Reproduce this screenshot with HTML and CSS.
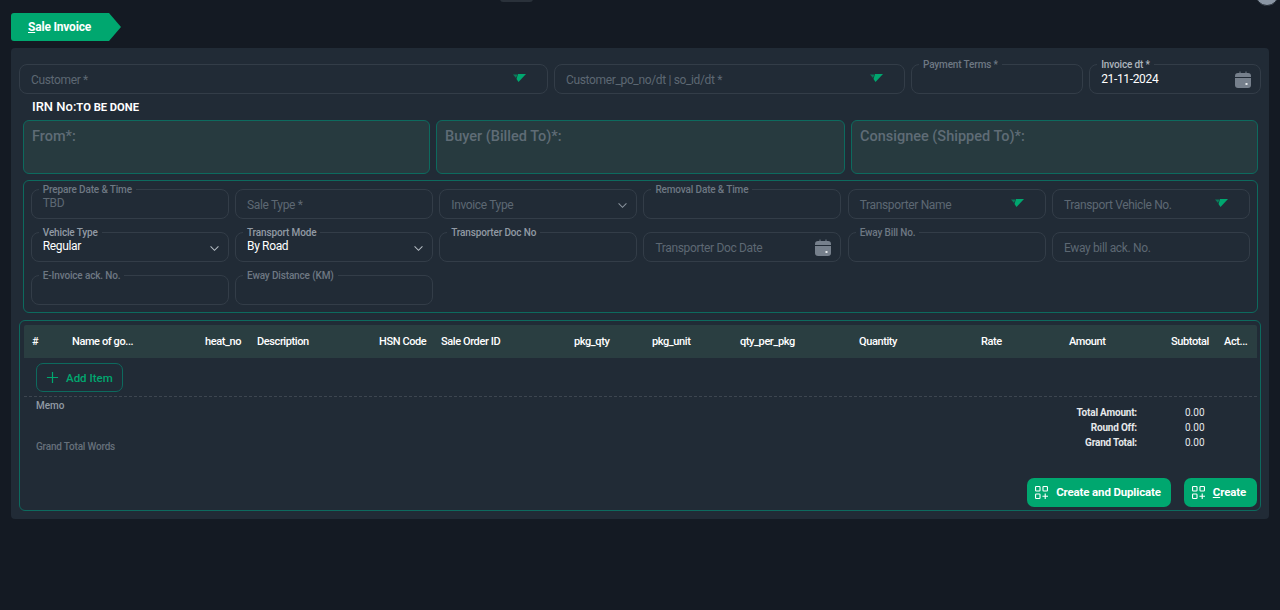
FILE: index.html
```html
<!DOCTYPE html>
<html lang="en">
<head>
<meta charset="utf-8">
<title>Sale Invoice</title>
<link rel="stylesheet" href="styles.css">
</head>
<body>
<div class="topbits"><span class="topchip"></span><span class="avatar"></span></div>
<main class="page">
  <div class="tab"><span><u>S</u>ale Invoice</span></div>
  <section class="card">
    <div class="row-top">
      <div class="field"><span class="ph">Customer *</span><svg class="tri" viewBox="0 0 13 8"><path d="M5 0h8L5.500 8 3.500 5z" fill="#00a76f"/><path d="M0 .5h4.500L3 4z" fill="#0b7a5a"/></svg></div>
      <div class="field"><span class="ph">Customer_po_no/dt | so_id/dt *</span><svg class="tri" viewBox="0 0 13 8"><path d="M5 0h8L5.500 8 3.500 5z" fill="#00a76f"/><path d="M0 .5h4.500L3 4z" fill="#0b7a5a"/></svg></div>
      <div class="field"><label class="lg">Payment Terms *</label></div>
      <div class="field"><label class="lg lg-on">Invoice dt *</label><span class="val">21-11-2024</span><svg class="cal" viewBox="0 0 16 17"><path d="M3 2h1.500V.5h1V2h5V.5h1V2H13a3 3 0 0 1 3 3v1H0V5a3 3 0 0 1 3-3z" fill="#76808c"/><path d="M0 7h16v7a3 3 0 0 1-3 3H3a3 3 0 0 1-3-3z" fill="#76808c"/><rect x="10.500" y="12" width="2" height="2" fill="#e4e7ea"/></svg></div>
    </div>
    <div class="irn">IRN No:<b>TO BE DONE</b></div>
    <div class="parties">
      <div class="party">From*:</div>
      <div class="party">Buyer (Billed To)*:</div>
      <div class="party">Consignee (Shipped To)*:</div>
    </div>
    <div class="details">
      <div class="field"><label class="lg">Prepare Date &amp; Time</label><span class="val dim">TBD</span></div>
      <div class="field"><span class="ph">Sale Type *</span></div>
      <div class="field"><span class="ph">Invoice Type</span><svg class="chev" viewBox="0 0 12 8"><path d="M1.500 1.500 6 6l4.500-4.500" fill="none" stroke="#8a939d" stroke-width="1.200"/></svg></div>
      <div class="field"><label class="lg">Removal Date &amp; Time</label></div>
      <div class="field"><span class="ph">Transporter Name</span><svg class="tri" viewBox="0 0 13 8"><path d="M5 0h8L5.500 8 3.500 5z" fill="#00a76f"/><path d="M0 .5h4.500L3 4z" fill="#0b7a5a"/></svg></div>
      <div class="field"><span class="ph">Transport Vehicle No.</span><svg class="tri" viewBox="0 0 13 8"><path d="M5 0h8L5.500 8 3.500 5z" fill="#00a76f"/><path d="M0 .5h4.500L3 4z" fill="#0b7a5a"/></svg></div>

      <div class="field"><label class="lg lg-mid">Vehicle Type</label><span class="val">Regular</span><svg class="chev" viewBox="0 0 12 8"><path d="M1.500 1.500 6 6l4.500-4.500" fill="none" stroke="#b4bbc2" stroke-width="1.200"/></svg></div>
      <div class="field"><label class="lg lg-mid">Transport Mode</label><span class="val">By Road</span><svg class="chev" viewBox="0 0 12 8"><path d="M1.500 1.500 6 6l4.500-4.500" fill="none" stroke="#b4bbc2" stroke-width="1.200"/></svg></div>
      <div class="field"><label class="lg lg-mid">Transporter Doc No</label></div>
      <div class="field"><span class="ph">Transporter Doc Date</span><svg class="cal" viewBox="0 0 16 17"><path d="M3 2h1.500V.5h1V2h5V.5h1V2H13a3 3 0 0 1 3 3v1H0V5a3 3 0 0 1 3-3z" fill="#76808c"/><path d="M0 7h16v7a3 3 0 0 1-3 3H3a3 3 0 0 1-3-3z" fill="#76808c"/><rect x="10.500" y="12" width="2" height="2" fill="#e4e7ea"/></svg></div>
      <div class="field"><label class="lg">Eway Bill No.</label></div>
      <div class="field"><span class="ph">Eway bill ack. No.</span></div>

      <div class="field"><label class="lg">E-Invoice ack. No.</label></div>
      <div class="field"><label class="lg">Eway Distance (KM)</label></div>
    </div>
    <div class="items">
      <div class="thead">
        <span>#</span><span>Name of go...</span><span>heat_no</span><span>Description</span><span>HSN Code</span><span>Sale Order ID</span><span>pkg_qty</span><span>pkg_unit</span><span>qty_per_pkg</span><span>Quantity</span><span>Rate</span><span>Amount</span><span>Subtotal</span><span>Act...</span>
      </div>
      <div class="add-row">
        <button class="add" type="button"><svg viewBox="0 0 14 14"><path d="M7 1v12M1 7h12" stroke="#00a76f" stroke-width="1.300" fill="none"/></svg>Add Item</button>
      </div>
      <div class="summary">
        <div class="notes">
          <div class="memo">Memo</div>
          <div class="words">Grand Total Words</div>
        </div>
        <dl class="totals">
          <dt>Total Amount:</dt><dd>0.00</dd>
          <dt>Round Off:</dt><dd>0.00</dd>
          <dt>Grand Total:</dt><dd>0.00</dd>
        </dl>
      </div>
      <div class="actions">
        <button class="btn" type="button"><svg viewBox="0 0 14 14"><g fill="none" stroke="#fff" stroke-width="1.200"><rect x=".6" y=".6" width="4.800" height="4.800" rx=".8"/><rect x="8.600" y=".6" width="4.800" height="4.800" rx=".8"/><rect x=".6" y="8.600" width="4.800" height="4.800" rx=".8"/><path d="M11 8v6M8 11h6"/></g></svg><span>Create and Duplicate</span></button>
        <button class="btn" type="button"><svg viewBox="0 0 14 14"><g fill="none" stroke="#fff" stroke-width="1.200"><rect x=".6" y=".6" width="4.800" height="4.800" rx=".8"/><rect x="8.600" y=".6" width="4.800" height="4.800" rx=".8"/><rect x=".6" y="8.600" width="4.800" height="4.800" rx=".8"/><path d="M11 8v6M8 11h6"/></g></svg><span><u>C</u>reate</span></button>
      </div>
    </div>
  </section>
</main>
</body>
</html>
```
FILE: styles.css
```css
* { box-sizing: border-box; }
html, body { margin: 0; height: 610px; overflow: hidden; }
body { background: #141a23; font-family: Roboto, "Liberation Sans", sans-serif; color: #fff; position: relative; }
.topbits { position: absolute; inset: 0 0 auto 0; height: 6px; }
.topchip { position: absolute; left: 500px; top: -8px; width: 33px; height: 10px; border-radius: 3px; background: #2a313a; }
.avatar { position: absolute; left: 1255px; top: -18px; width: 24px; height: 24px; border-radius: 50%; background: #8a95a3; border: 1px solid #252c35; }
.page { padding: 13px 11px 0 11px; }
.tab { width: 110px; height: 28px; background: #00a76f; border-radius: 3px 0 0 3px; clip-path: polygon(0 0, 98px 0, 110px 14px, 98px 28px, 0 28px); display: flex; align-items: center; padding-left: 17px; font-size: 12px; font-weight: 700; margin-bottom: 7px; letter-spacing: -.2px; }
.tab u { text-decoration-thickness: 1px; }
.card { background: #212b36; border-radius: 4px; height: 471px; padding: 16px 8px 0 8px; }
.row-top { display: grid; grid-template-columns: 529px 351px 172.2px 172px; column-gap: 6px; width: 1242px; }
.field { position: relative; height: 30px; border: 1px solid #333d48; border-radius: 8px; display: flex; align-items: center; padding: 0 11px; font-size: 12px; letter-spacing: -.35px; }
.ph { color: #5d6873; position: relative; top: .5px; }
.val { color: #fff; position: relative; top: -1px; }
.row-top .val { top: 0; }
.val.dim { color: #5d6873; top: -1px; }
.lg { position: absolute; left: 7px; top: -6px; padding: 0 4px; background: #212b36; color: #6e7883; font-size: 10px; font-weight: 500; line-height: 11px; white-space: nowrap; letter-spacing: -.15px; }
.lg-on { color: #aeb5bd; }
.lg-mid { color: #919aa4; }
.tri { position: absolute; right: 21px; top: 9px; width: 13px; height: 8px; }
.chev { position: absolute; right: 8px; top: 12px; width: 11px; height: 7px; }
.cal { position: absolute; right: 9px; top: 6px; width: 16px; height: 17px; }
.irn { margin: 6px 0 0 13px; font-size: 13px; line-height: 13px; font-weight: 500; height: 13px; }
.irn b { font-size: 11.2px; font-weight: 700; }
.parties { display: grid; grid-template-columns: 407px 409px 407px; column-gap: 6px; margin: 7px 3px 0 4px; width: 1235px; }
.party { height: 54px; border: 1px solid #0d6a5e; border-radius: 6px; background: #273a3f; color: #5f6c76; font-size: 14.5px; font-weight: 500; padding: 7px 8px; }
.details { display: grid; grid-template-columns: repeat(6, 1fr); column-gap: 6.3px; row-gap: 13px; align-content: start; margin: 6px 0 0 4px; width: 1235px; height: 133px; padding: 8px 7.2px 0 6.8px; border: 1px solid #0d6a5e; border-radius: 6px; }
.items { width: 1242px; height: 191px; margin-top: 7px; border: 1px solid #0d6a5e; border-radius: 6px; padding: 4px 3px 0 4px; display: flex; flex-direction: column; }
.thead { display: grid; grid-template-columns: 40px 133px 52px 122px 62px 133px 78px 88px 119px 122px 88px 102px 53px 1fr; align-items: center; height: 33px; padding-left: 8px; background: #2a3e41; border-radius: 2px 2px 0 0; font-size: 11px; font-weight: 500; white-space: nowrap; letter-spacing: -.4px; }
.add-row { height: 39px; padding: 5px 0 0 12px; border-bottom: 1px dashed #3d4650; }
.add { display: flex; align-items: center; gap: 7px; width: 87px; height: 29px; padding: 0 0 0 9px; background: none; border: 1px solid #0d6a5e; border-radius: 7px; color: #00a76f; font: 500 11.5px Roboto, sans-serif; }
.add svg { width: 13px; height: 13px; }
.summary { display: flex; justify-content: space-between; height: 81px; font-size: 10px; font-weight: 500; }
.notes { padding: 3px 0 0 12px; }
.memo { color: #919aa4; line-height: 11px; }
.words { color: #66707b; margin-top: 30px; line-height: 11px; letter-spacing: -.2px; }
.totals { display: grid; grid-template-columns: 90px 48px; margin: 8px 72px 0 0; grid-auto-rows: 15px; align-items: center; }
.totals dt { text-align: right; font-weight: 700; color: #e6e8ea; letter-spacing: -.2px; }
.totals dd { margin: 0 0 0 48px; white-space: nowrap; color: #e6e8ea; font-weight: 400; }
.actions { display: flex; justify-content: flex-end; gap: 13px; }
.btn { display: flex; align-items: center; gap: 8px; height: 29px; padding: 0 10px 0 8px; background: #00a76f; border: 0; border-radius: 7px; color: #fff; font: 700 11.5px Roboto, sans-serif; letter-spacing: -.15px; white-space: nowrap; }
.btn:last-child { padding-right: 11px; }
.btn span { position: relative; top: -1px; }
.btn svg { width: 13px; height: 13px; }
```
